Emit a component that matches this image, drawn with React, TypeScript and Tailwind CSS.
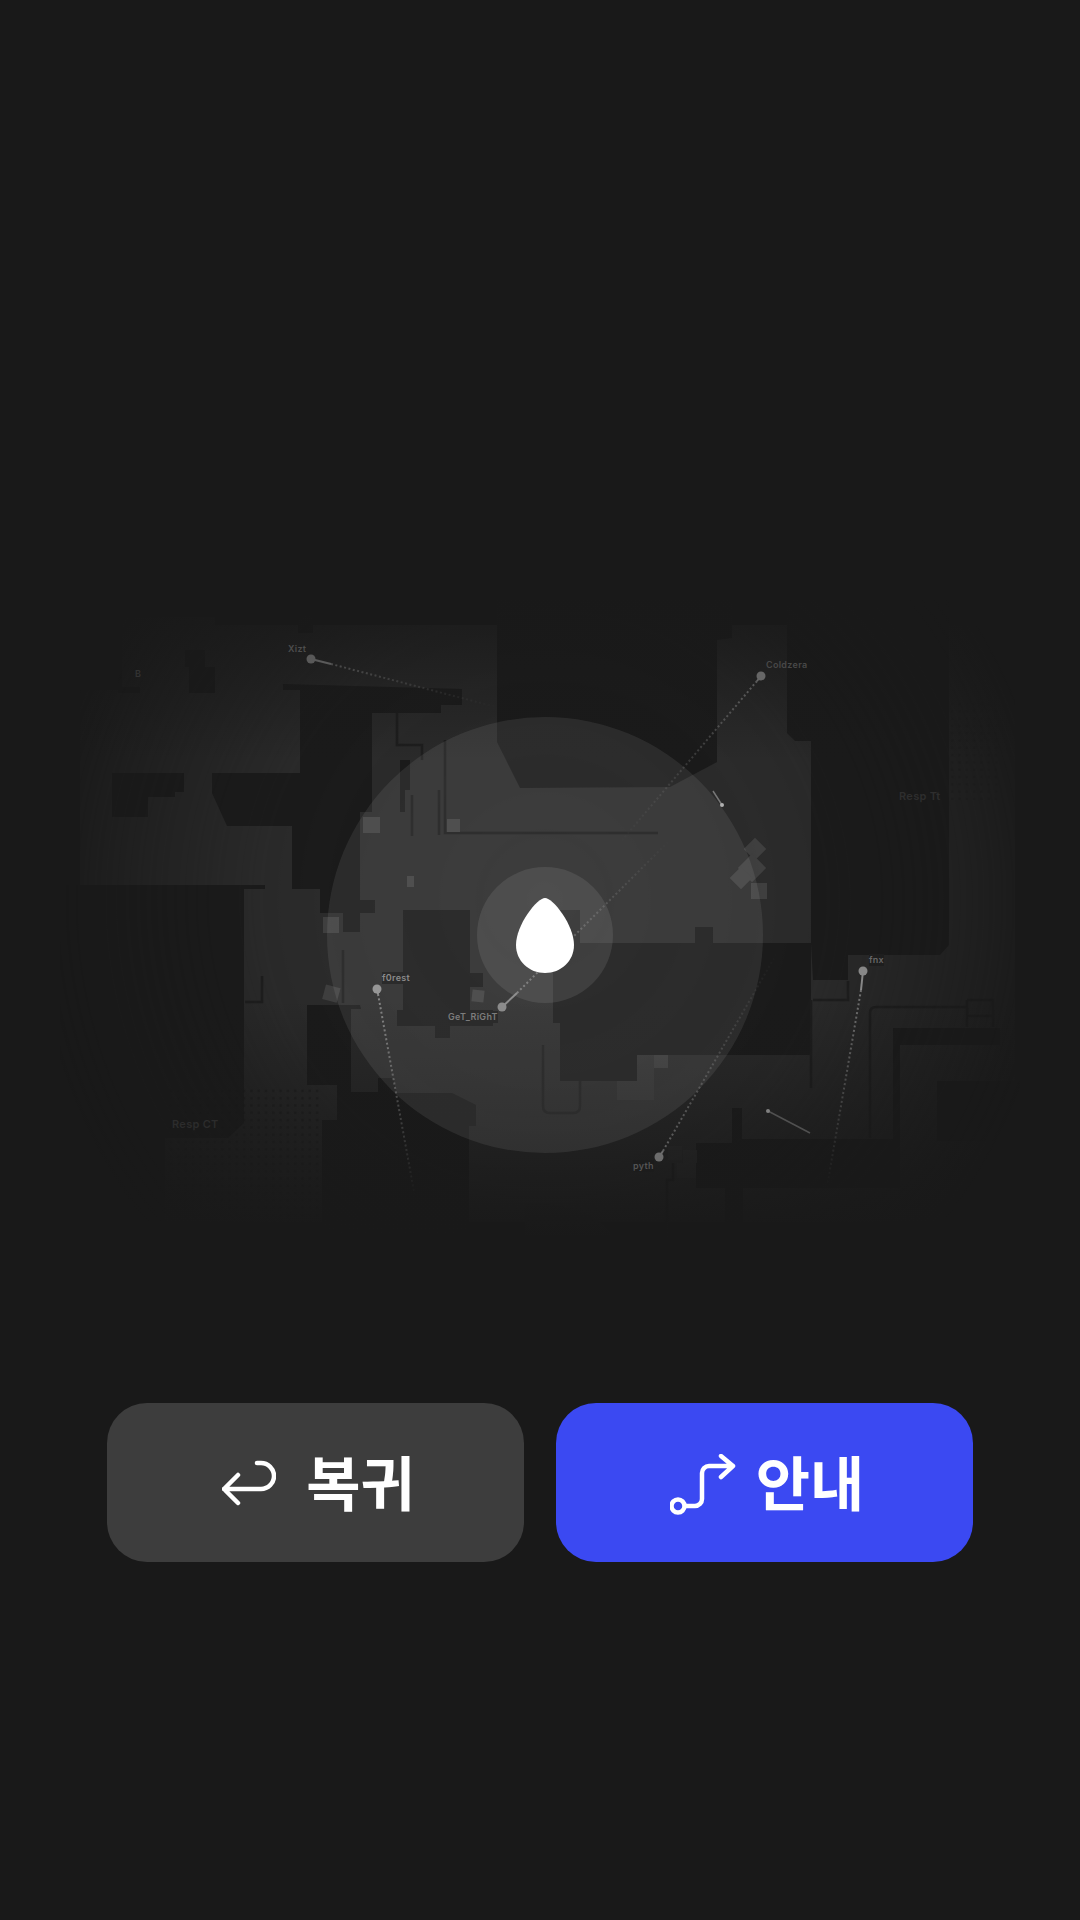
import type { FC } from "react";

const FLOOR =
  "122,617 215,617 215,625 987,625 1015,690 1015,1150 1000,1222 165,1222 165,1138 80,885 80,690 122,690";

// dark areas of the radar, in page coordinates
const HOLES = [
  "185,650 205,650 205,667 215,667 215,693 189,693 189,667 185,667",
  "118,670 122,670 122,687 140,687 140,693 118,693",
  "298,615 313,615 313,633 298,633",
  "283,684 462,689 462,705 441,705 441,713 372,713 372,812 360,812 360,900 375,900 375,913 360,913 360,932 343,932 343,913 320,913 320,889 292,889 292,826 227,826 212,793 212,773 300,773 300,690 283,690",
  "112,773 184,773 184,792 175,792 175,797 148,797 148,817 112,817",
  "497,600 732,600 732,638 717,640 717,762 670,787 520,788 497,742",
  "787,600 949,600 949,945 940,955 848,955 848,980 813,980 811,943 811,1055 637,1055 637,1081 560,1081 560,1023 553,1023 553,943 811,943 811,741 795,741 787,733",
  "560,910 580,910 580,943 560,943",
  "695,927 713,927 713,943 695,943",
  "403,910 470,910 470,973 483,973 483,987 470,987 470,1010 493,1010 493,1026 450,1026 450,1038 435,1038 435,1026 397,1026 397,1010 403,1010",
  "60,885 265,885 265,889 244,889 244,1123 228,1138 165,1138 165,1222 60,1222",
  "307,1005 360,1005 361,1009 351,1009 351,1092 378,1092 378,1078 393,1078 397,1093 452,1093 476,1105 476,1126 469,1126 469,1240 322,1240 322,1120 337,1120 337,1085 307,1085",
  "696,1143 732,1143 732,1108 742,1108 742,1139 893,1139 893,1028 1000,1028 1000,1045 900,1045 900,1188 743,1188 743,1223 725,1223 725,1188 696,1188",
  "937,1081 1020,1081 1020,1141 937,1141",
  "400,760 410,760 410,790 405,790 405,812 400,812",
];

const WALLS = [
  "M397 713V745H422V760",
  "M412 795V836",
  "M439 790V835",
  "M445 740V833H658",
  "M343 950V1003",
  "M262 976V1002H245",
  "M811 1000V1088",
  "M813 1000H848V981",
  "M870 1138V1013Q870 1007 876 1007H967",
  "M967 1000H993V1027M967 1000V1027M967 1016H993",
  "M543 1045V1106Q543 1113 550 1113H573Q580 1113 580 1106V1081",
  "M667 1240V1180H673V1163",
];

const Track: FC<{
  id: string;
  x1: number;
  y1: number;
  x2: number;
  y2: number;
  sx: number;
  sy: number;
  dim: number;
}> = ({ id, x1, y1, x2, y2, sx, sy, dim }) => (
  <g opacity={dim}>
    <defs>
      <linearGradient id={id} gradientUnits="userSpaceOnUse" x1={x1} y1={y1} x2={x2} y2={y2}>
        <stop offset="0" stopColor="#b0b0b0" stopOpacity="0.75" />
        <stop offset="1" stopColor="#b0b0b0" stopOpacity="0" />
      </linearGradient>
    </defs>
    <line x1={x1} y1={y1} x2={sx} y2={sy} stroke="#a0a0a0" strokeWidth="2" />
    <line x1={sx} y1={sy} x2={x2} y2={y2} stroke={`url(#${id})`} strokeWidth="2" strokeDasharray="2 2.5" />
    <circle cx={x1} cy={y1} r="4.5" fill="#a0a0a0" />
  </g>
);

const RadarMap: FC = () => (
  <svg width="1080" height="1403" viewBox="0 0 1080 1403" className="block">
    <defs>
      <radialGradient id="fade" gradientUnits="userSpaceOnUse" cx="0" cy="0" r="1" gradientTransform="translate(545 900) scale(510 520)">
        <stop offset="0" stopColor="#fff" />
        <stop offset="0.55" stopColor="#fff" stopOpacity="0.85" />
        <stop offset="0.85" stopColor="#fff" stopOpacity="0.3" />
        <stop offset="1" stopColor="#fff" stopOpacity="0" />
      </radialGradient>
      <mask id="radar" maskUnits="userSpaceOnUse" x="0" y="500" width="1080" height="800">
        <rect x="0" y="500" width="1080" height="800" fill="url(#fade)" />
      </mask>
      <linearGradient id="fadeDown" x1="0" y1="0" x2="0" y2="1">
        <stop offset="0" stopColor="#191919" stopOpacity="0" />
        <stop offset="1" stopColor="#191919" />
      </linearGradient>
      <linearGradient id="fadeUp" x1="0" y1="1" x2="0" y2="0">
        <stop offset="0" stopColor="#191919" stopOpacity="0" />
        <stop offset="1" stopColor="#191919" stopOpacity="0.9" />
      </linearGradient>
      <pattern id="dots" patternUnits="userSpaceOnUse" width="7.3" height="7.3">
        <rect x="2" y="2" width="2.4" height="2.4" fill="#141414" />
      </pattern>
    </defs>
    <g mask="url(#radar)">
      <polygon points={FLOOR} fill="#2d2d2d" />
      {HOLES.map((pts) => (
        <polygon key={pts} points={pts} fill="#1b1b1b" />
      ))}
      <g fill="none" stroke="#1e1e1e" strokeWidth="2.5">
        {WALLS.map((d) => (
          <path key={d} d={d} />
        ))}
      </g>
      <rect x="165" y="1087" width="157" height="135" fill="url(#dots)" opacity="0.6" />
      <rect x="950" y="700" width="50" height="100" fill="url(#dots)" opacity="0.4" />
      <g fill="#444444">
        <rect x="363" y="817" width="17" height="16" />
        <rect x="447" y="819" width="13" height="13" />
        <rect x="407" y="876" width="7" height="11" />
        <rect x="323" y="917" width="16" height="16" />
        <rect x="324" y="986" width="15" height="15" transform="rotate(15 331 993)" />
        <rect x="472" y="990" width="12" height="12" transform="rotate(6 478 996)" />
        <rect x="747" y="841" width="16" height="16" transform="rotate(45 755 849)" />
        <rect x="742" y="858" width="20" height="20" transform="rotate(45 752 868)" />
        <rect x="733" y="870" width="16" height="16" transform="rotate(45 741 878)" />
        <rect x="751" y="883" width="16" height="16" />
        <rect x="654" y="1055" width="14" height="13" />
      </g>
      <path d="M637 1055H654V1100H617V1081H637Z" fill="#383838" />
      <g fill="#333333">
        <rect x="668" y="1146" width="14" height="14" />
        <rect x="683" y="1150" width="14" height="13" />
        <rect x="677" y="1163" width="19" height="15" />
      </g>
      <path d="M525 1203C560 1203 600 1212 612 1236H525Z" fill="#2a2a2a" />
    </g>
    <rect x="0" y="1000" width="1080" height="240" fill="url(#fadeDown)" />
    <rect x="0" y="600" width="1080" height="160" fill="url(#fadeUp)" />

    <circle cx="545" cy="935" r="218" fill="#fff" fillOpacity="0.08" />
    <circle cx="545" cy="935" r="68" fill="#fff" fillOpacity="0.09" />

    <Track id="t1" x1={311} y1={659} x2={500} y2={708} sx={331} sy={664} dim={0.45} />
    <Track id="t2" x1={761} y1={676} x2={618} y2={845} sx={757} sy={681} dim={0.55} />
    <Track id="t3" x1={377} y1={989} x2={415} y2={1197} sx={378} sy={994} dim={0.9} />
    <Track id="t4" x1={502} y1={1007} x2={670} y2={840} sx={517} sy={993} dim={0.8} />
    <Track id="t5" x1={659} y1={1157} x2={777} y2={953} sx={663} sy={1151} dim={0.6} />
    <Track id="t6" x1={863} y1={971} x2={827} y2={1187} sx={861} sy={990} dim={0.8} />

    <line x1="722" y1="805" x2="713" y2="791" stroke="#777777" strokeWidth="1.5" />
    <circle cx="722" cy="805" r="2" fill="#b0b0b0" />
    <line x1="768" y1="1111" x2="810" y2="1133" stroke="#505050" strokeWidth="1.5" />
    <circle cx="768" cy="1111" r="2" fill="#808080" />

    <path
      d="M545 898C553 898 574 925 574 945C574 961 561 973 545 973C529 973 516 961 516 945C516 925 537 898 545 898Z"
      fill="#fff"
    />
  </svg>
);

const MapLabels: FC = () => (
  <div className="font-['Inter',sans-serif] font-semibold text-[9px] leading-[12px] tracking-[0.3px]">
    <span className="absolute left-[288px] top-[643px] text-[#4d4d4d]">Xizt</span>
    <span className="absolute left-[766px] top-[659px] text-[#484848]">Coldzera</span>
    <span className="absolute left-[382px] top-[972px] bg-[#2b2b2b] text-[#8a8a8a]">f0rest</span>
    <span className="absolute left-[448px] top-[1011px] bg-[#2b2b2b] text-[#7c7c7c]">GeT_RiGhT</span>
    <span className="absolute left-[633px] top-[1160px] bg-[#1c1c1c] text-[#555555]">pyth</span>
    <span className="absolute left-[869px] top-[954px] bg-[#1e1e1e] text-[#666666]">fnx</span>
    <span className="absolute left-[135px] top-[668px] text-[#333333]">B</span>
    <span className="absolute left-[899px] top-[790px] text-[11px] text-[#2e2e2e]">Resp Tt</span>
    <span className="absolute left-[172px] top-[1118px] text-[11px] text-[#2c2c2c]">Resp CT</span>
  </div>
);

const ReturnIcon: FC = () => (
  <svg width="54" height="48" viewBox="222 1460 54 48" fill="none" stroke="#fff" strokeWidth="4.5" strokeLinecap="round" strokeLinejoin="round" className="mt-[3px]">
    <path d="M238 1475L224 1489L238 1503M224 1489H261A13 13 0 0 0 261 1463H257" />
  </svg>
);

const RouteIcon: FC = () => (
  <svg width="66" height="62" viewBox="670 1454 66 62" fill="none" stroke="#fff" strokeWidth="4.5" strokeLinecap="round" strokeLinejoin="round" className="mt-[5px]">
    <circle cx="678" cy="1506" r="6.5" />
    <path d="M685 1506H695A7 7 0 0 0 702 1499V1473A7 7 0 0 1 709 1466H733M721 1456L733 1466L721 1477" />
  </svg>
);

const App: FC = () => (
  <div className="relative w-[1080px] h-[1920px] overflow-hidden bg-[#191919]">
    <RadarMap />
    <MapLabels />
    <div className="flex gap-[32px] px-[107px]">
      <button
        type="button"
        className="flex h-[159px] w-[417px] items-center justify-center gap-[30px] rounded-[40px] bg-[#3d3d3d] pl-[6px]"
      >
        <ReturnIcon />
        <span className="pb-[5px] font-['Noto_Sans_CJK_KR',sans-serif] text-[59px] font-bold leading-none text-white">복귀</span>
      </button>
      <button
        type="button"
        className="flex h-[159px] w-[417px] items-center justify-center gap-[20px] rounded-[40px] bg-[#3b49f2] pl-[5px]"
      >
        <RouteIcon />
        <span className="pb-[5px] font-['Noto_Sans_CJK_KR',sans-serif] text-[59px] font-bold leading-none text-white">안내</span>
      </button>
    </div>
  </div>
);

export default App;
